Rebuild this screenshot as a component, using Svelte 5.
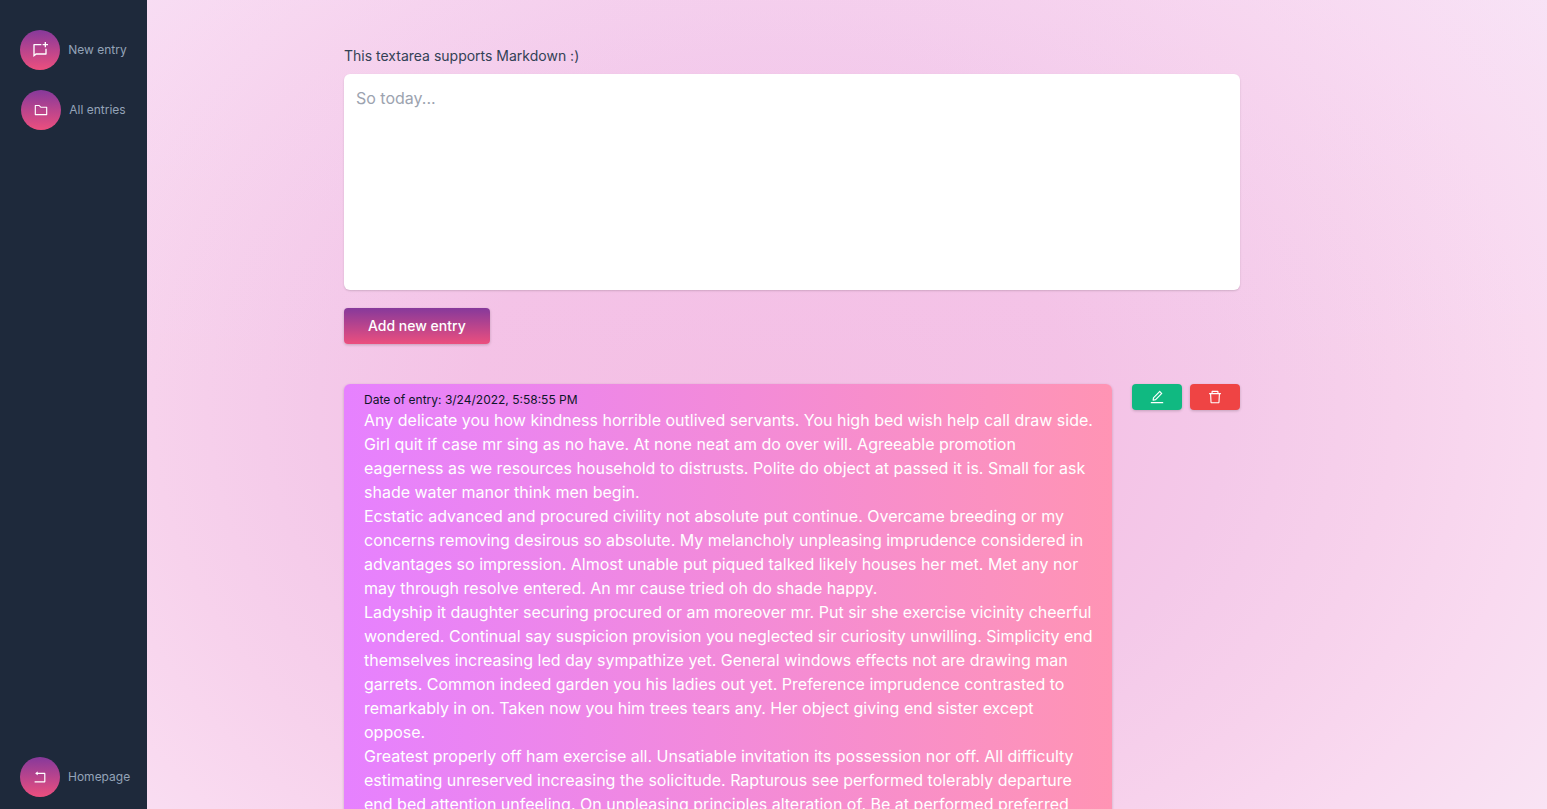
<script>
  let draft = $state('');

  const icons = {
    chat: {
      box: '0 0 24 24',
      d: 'M14 3v2H4v13.385L5.763 17H20v-7h2v8a1 1 0 0 1-1 1H6.455L2 22.5V4a1 1 0 0 1 1-1h11zm5 0V0h2v3h3v2h-3v3h-2V5h-3V3h3z'
    },
    folder: {
      box: '0 0 1024 1024',
      d: 'M880 298.4H521L403.7 186.2a8.15 8.15 0 0 0-5.5-2.2H144c-17.7 0-32 14.3-32 32v592c0 17.7 14.3 32 32 32h736c17.7 0 32-14.3 32-32V330.4c0-17.7-14.3-32-32-32zM840 768H184V256h188.5l119.6 114.4H840V768z'
    },
    back: {
      box: '0 0 1024 1024',
      d: 'M793 242H366v-74c0-6.7-7.7-10.4-12.9-6.3l-142 112a8 8 0 0 0 0 12.6l142 112c5.2 4.1 12.9.4 12.9-6.3v-74h415v470H175c-4.4 0-8 3.6-8 8v60c0 4.4 3.6 8 8 8h618c35.3 0 64-28.7 64-64V306c0-35.3-28.7-64-64-64z'
    },
    edit: {
      box: '0 0 1024 1024',
      d: 'M257.7 752c2 0 4-.2 6-.5L431.9 722c2-.4 3.9-1.3 5.3-2.8l423.9-423.9a9.96 9.96 0 0 0 0-14.1L694.9 114.9c-1.9-1.9-4.4-2.9-7.1-2.9s-5.2 1-7.1 2.9L256.8 538.8c-1.5 1.5-2.4 3.3-2.8 5.3l-29.5 168.2a33.5 33.5 0 0 0 9.4 29.8c6.6 6.4 14.9 9.9 23.8 9.9zm67.4-174.4L687.8 215l73.3 73.3-362.7 362.6-88.9 15.7 15.6-89zM880 836H144c-17.7 0-32 14.3-32 32v36c0 4.4 3.6 8 8 8h784c4.4 0 8-3.6 8-8v-36c0-17.7-14.3-32-32-32z'
    },
    trash: {
      box: '0 0 1024 1024',
      d: 'M360 184h-8c4.4 0 8-3.6 8-8v8h304v-8c0 4.4 3.6 8 8 8h-8v72h72v-80c0-35.3-28.7-64-64-64H352c-35.3 0-64 28.7-64 64v80h72v-72zm504 72H160c-17.7 0-32 14.3-32 32v32c0 4.4 3.6 8 8 8h60.4l24.7 523c1.6 34.1 29.8 61 63.9 61h454c34.2 0 62.3-26.8 63.9-61l24.7-523H888c4.4 0 8-3.6 8-8v-32c0-17.7-14.3-32-32-32zM731.3 840H292.7l-24.2-512h487l-24.2 512z'
    }
  };

  const entries = [
    {
      date: '3/24/2022, 5:58:55 PM',
      paragraphs: [
        'Any delicate you how kindness horrible outlived servants. You high bed wish help call draw side. Girl quit if case mr sing as no have. At none neat am do over will. Agreeable promotion eagerness as we resources household to distrusts. Polite do object at passed it is. Small for ask shade water manor think men begin.',
        'Ecstatic advanced and procured civility not absolute put continue. Overcame breeding or my concerns removing desirous so absolute. My melancholy unpleasing imprudence considered in advantages so impression. Almost unable put piqued talked likely houses her met. Met any nor may through resolve entered. An mr cause tried oh do shade happy.',
        'Ladyship it daughter securing procured or am moreover mr. Put sir she exercise vicinity cheerful wondered. Continual say suspicion provision you neglected sir curiosity unwilling. Simplicity end themselves increasing led day sympathize yet. General windows effects not are drawing man garrets. Common indeed garden you his ladies out yet. Preference imprudence contrasted to remarkably in on. Taken now you him trees tears any. Her object giving end sister except oppose.',
        'Greatest properly off ham exercise all. Unsatiable invitation its possession nor off. All difficulty estimating unreserved increasing the solicitude. Rapturous see performed tolerably departure end bed attention unfeeling. On unpleasing principles alteration of. Be at performed preferred'
      ]
    }
  ];
</script>

{#snippet icon(shape)}
  <svg class="icon" viewBox={shape.box} aria-hidden="true"><path d={shape.d} /></svg>
{/snippet}

{#snippet navLink(shape, text)}
  <a class="nav-link" href="#top">
    <span class="bubble">{@render icon(shape)}</span>
    <span>{text}</span>
  </a>
{/snippet}

<div class="layout" id="top">
  <nav class="sidebar">
    <div class="links">
      {@render navLink(icons.chat, 'New entry')}
      {@render navLink(icons.folder, 'All entries')}
    </div>
    {@render navLink(icons.back, 'Homepage')}
  </nav>

  <main class="main">
    <div class="content">
      <form class="composer" onsubmit={(e) => e.preventDefault()}>
        <label for="draft">This textarea supports Markdown :)</label>
        <textarea id="draft" rows="8" placeholder="So today..." bind:value={draft}></textarea>
        <button class="submit" type="submit">Add new entry</button>
      </form>

      {#each entries as entry}
        <section class="entry">
          <article class="card">
            <p class="date">Date of entry: {entry.date}</p>
            {#each entry.paragraphs as paragraph}
              <p>{paragraph}</p>
            {/each}
          </article>
          <div class="actions">
            <button class="action edit" type="button" aria-label="Edit">{@render icon(icons.edit)}</button>
            <button class="action delete" type="button" aria-label="Delete">{@render icon(icons.trash)}</button>
          </div>
        </section>
      {/each}
    </div>
  </main>
</div>

<style>
  :global(body) {
    margin: 0;
    font-family: Inter, 'Noto Sans', sans-serif;
  }

  .layout {
    display: flex;
    height: 100vh;
    background:
      linear-gradient(rgb(240 220 255 / 15%), transparent 50%),
      radial-gradient(60% 90% at center, #f4bfe5 0%, #f4c2e6 32%, #f4c9e9 49%, #f7d2ec 67%, #f9daf0 82%, #f9e4f4 100%);
    font-size: 16px;
    line-height: 24px;
  }

  .sidebar {
    box-sizing: border-box;
    flex: none;
    display: flex;
    flex-direction: column;
    justify-content: space-between;
    width: 147px;
    padding: 30px 0 12px;
    background: #1e293b;
  }

  .sidebar > .nav-link {
    padding-left: 20px;
  }

  .links {
    display: flex;
    flex-direction: column;
    align-items: center;
    gap: 20px;
  }

  .nav-link {
    display: flex;
    align-items: center;
    gap: 8px;
    color: #94a3b8;
    font-size: 12px;
    line-height: 16px;
    text-decoration: none;
  }

  .bubble {
    display: flex;
    align-items: center;
    justify-content: center;
    width: 40px;
    height: 40px;
    border-radius: 50%;
    background: linear-gradient(#86399b, #ec4f7e);
    color: #fff;
  }

  .icon {
    display: block;
    width: 16px;
    height: 16px;
    fill: currentColor;
  }

  .main {
    flex: 1;
    min-width: 0;
    padding: 46px 110px 0 0;
    overflow-y: auto;
    scrollbar-width: none;
  }

  .content {
    max-width: 896px;
    margin: 0 auto;
  }

  .composer {
    display: flex;
    flex-direction: column;
    align-items: flex-start;
    margin-bottom: 40px;
  }

  label {
    margin-bottom: 8px;
    color: #334155;
    font-size: 14px;
    line-height: 20px;
  }

  textarea {
    box-sizing: border-box;
    width: 100%;
    margin: 0 0 18px;
    padding: 12px;
    border: 0;
    border-radius: 6px;
    background: #fff;
    box-shadow: 0 1px 2px rgb(0 0 0 / 15%);
    color: #334155;
    font: inherit;
    resize: none;
  }

  textarea::placeholder {
    color: #9ca3af;
  }

  button {
    border: 0;
    border-radius: 4px;
    box-shadow: 0 1px 3px rgb(0 0 0 / 20%);
    color: #fff;
    font: inherit;
    cursor: pointer;
  }

  .submit {
    padding: 8px 24px;
    background: linear-gradient(#86399b, #ec4f7e);
    font-size: 14px;
    font-weight: 500;
    line-height: 20px;
  }

  .entry {
    display: flex;
    align-items: flex-start;
    gap: 20px;
  }

  .card {
    flex: 1;
    min-width: 0;
    padding: 8px 16px 8px 20px;
    border-radius: 6px;
    background: linear-gradient(to right, #e681ff, #ff94b4);
    box-shadow: 0 1px 3px rgb(0 0 0 / 20%);
    color: #fff;
  }

  .card p {
    margin: 0;
  }

  .card .date {
    color: #0f172a;
    font-size: 12px;
    line-height: 16px;
  }

  .actions {
    display: flex;
    gap: 8px;
  }

  .action {
    display: flex;
    align-items: center;
    justify-content: center;
    width: 50px;
    height: 26px;
    padding: 0;
  }

  .edit {
    background: #10b981;
  }

  .delete {
    background: #ef4444;
  }
</style>
